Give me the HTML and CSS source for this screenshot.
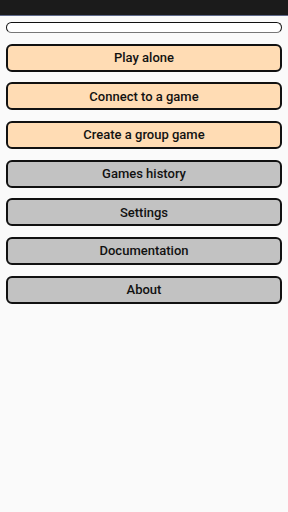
FILE: index.html
```html
<!doctype html>
<html lang="en">
  <head>
    <meta charset="UTF-8" />
    <meta name="viewport" content="width=device-width, initial-scale=1.0" />
    <title>Menu</title>
    <link rel="stylesheet" href="styles.css">
  </head>
  <body>
    <div class="statusBar"></div>

    <main class="menu">
      <input type="text" class="nameBox" />
      <button class="menuButton primary">Play alone</button>
      <button class="menuButton primary">Connect to a game</button>
      <button class="menuButton primary">Create a group game</button>
      <button class="menuButton">Games history</button>
      <button class="menuButton">Settings</button>
      <button class="menuButton">Documentation</button>
      <button class="menuButton">About</button>
    </main>
  </body>
</html>
```

FILE: styles.css
```css
/* Base Reset */
* {
  box-sizing: border-box;
  margin: 0;
  padding: 0;
}
html,
body {
  height: 100%;
}
body {
  font-family: Roboto, "Noto Sans", Arial, sans-serif;
  background-color: #fafafa;
  color: #111;
}
.statusBar {
  height: 16px;
  background-color: #1b1b1b;
  border-bottom: 1px solid #5f6a8a;
}
.menu {
  display: flex;
  flex-direction: column;
  gap: 10.67px;
  padding: 6px 6px 0;
}
.nameBox {
  height: 11px;
  width: 100%;
  border: 1.5px solid #111;
  border-bottom-color: #777;
  border-radius: 6px;
  background-color: #fff;
  margin-bottom: 0;
}
.menuButton {
  height: 28px;
  width: 100%;
  border: 2px solid #111;
  border-radius: 6px;
  background-color: #c2c2c2;
  font-family: inherit;
  font-size: 13px;
  font-weight: 500;
  color: #111;
  cursor: pointer;
}
.menuButton.primary {
  background-color: #ffdcb4;
}
```
